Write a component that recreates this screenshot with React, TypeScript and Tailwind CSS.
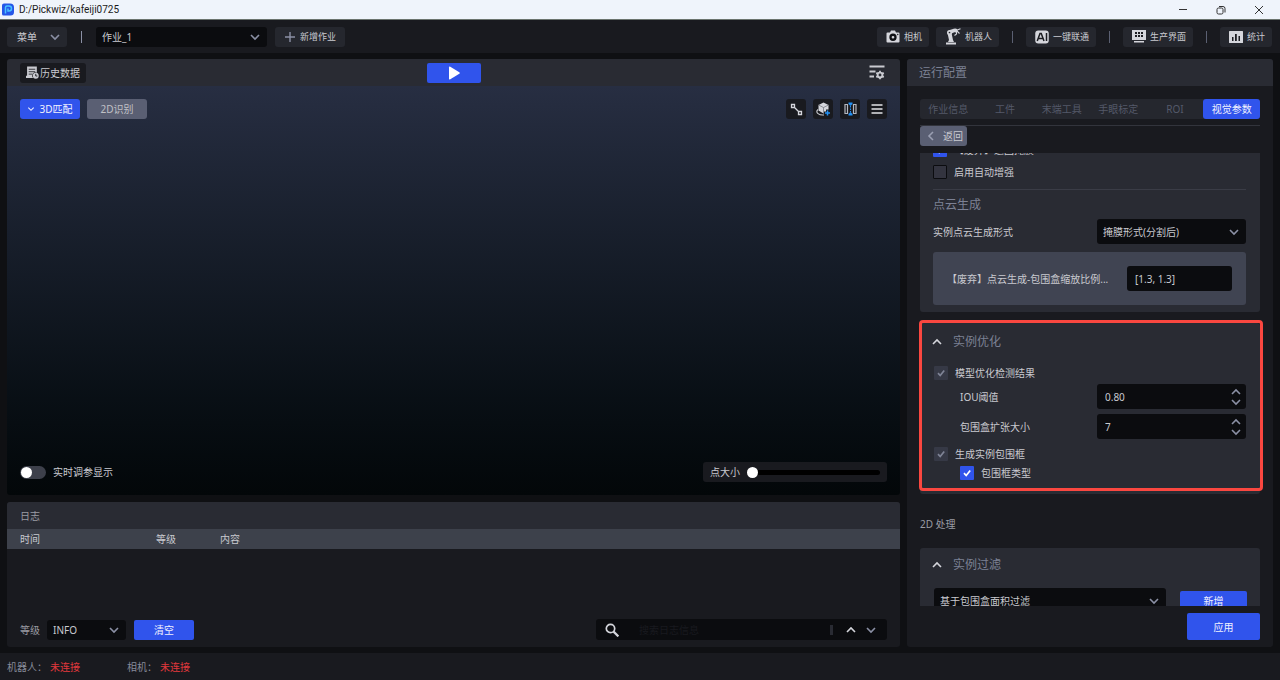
import React from "react";

function Chevron({ up = false, left = false, className = "" }: { up?: boolean; left?: boolean; className?: string }) {
  const d = left ? "M8 2 4 6l4 4" : up ? "M2 8l4-4 4 4" : "M2 4l4 4 4-4";
  return (
    <svg viewBox="0 0 12 12" className={"shrink-0 " + className} fill="none" stroke="currentColor" strokeWidth="1.6" aria-hidden="true">
      <path d={d} />
    </svg>
  );
}

function LogoIcon() {
  return (
    <svg viewBox="0 0 24 26" className="h-[13px] w-3 shrink-0" aria-hidden="true">
      <path d="M4 1h12a8 8 0 0 1 8 8v9a7 7 0 0 1-7 7H3a3 3 0 0 1-3-3V5a4 4 0 0 1 4-4z" fill="#2456e8" />
      <path d="M7 21V9a3 3 0 0 1 3-3h4a4.500 4.500 0 0 1 0 10h-2v-5" fill="none" stroke="#49c4ff" strokeWidth="3" />
    </svg>
  );
}

function HistoryIcon() {
  return (
    <svg viewBox="0 0 24 24" className="size-[13px] shrink-0" aria-hidden="true">
      <path d="M2 1h18v11.500a6 6 0 0 0-7 9.500H0v-4h2z" fill="#c9cad0" />
      <path d="M5 6h12M5 10.500h12M5 15h7" stroke="#191a1f" strokeWidth="1.500" />
      <circle cx="18" cy="18" r="5.500" fill="#c9cad0" />
      <path d="M18 14.500V18.500h3" fill="none" stroke="#191a1f" strokeWidth="1.700" />
    </svg>
  );
}

function CameraIcon() {
  return (
    <svg viewBox="0 0 28 26" className="h-[13px] w-3.5 shrink-0" aria-hidden="true">
      <path d="M3 5h5l2-4h8l2 4h5a2 2 0 0 1 2 2v16a2 2 0 0 1-2 2H3a2 2 0 0 1-2-2V7a2 2 0 0 1 2-2z" fill="#d5d6dc" />
      <circle cx="14" cy="14.500" r="5" fill="#d5d6dc" stroke="#101115" strokeWidth="4.600" />
      <circle cx="23.500" cy="9" r="1.400" fill="#17181c" />
    </svg>
  );
}

function RobotIcon() {
  return (
    <svg viewBox="0 0 32 34" className="h-[17px] w-4 shrink-0" fill="#d5d6dc" aria-hidden="true">
      <path d="M2 29h20v4H2zM6 28l2-4h8l2 4zM8 24 5 10h8l3 14z" />
      <circle cx="9" cy="9" r="5" />
      <path d="M8 4.500 19 1l3 6-11 5z" />
      <circle cx="21" cy="5" r="4" />
      <path d="M22 5l9-3.500M23 6v6l-4 3M24 6l5 5" fill="none" stroke="#d5d6dc" strokeWidth="2.200" />
      <circle cx="9" cy="9" r="1.700" fill="#25272e" />
    </svg>
  );
}

function AiIcon() {
  return (
    <svg viewBox="0 0 28 28" className="size-3.5 shrink-0" aria-hidden="true">
      <rect x="0.500" y="1" width="27" height="26" rx="6" fill="#d5d6dc" />
      <path d="M4.500 22 10 7h2.500L18 22M7 17h9M23 6v16" fill="none" stroke="#1c1d22" strokeWidth="3" />
    </svg>
  );
}

function ScreenIcon() {
  return (
    <svg viewBox="0 0 14 13" className="h-[13px] w-3.5 shrink-0" aria-hidden="true">
      <path d="M0 0h14v10H0zM2 11h10v1.500H2z" fill="#d5d6dc" />
      <path d="M3 2h2v2H3zM6 2h2v2H6zM9 2h2v2H9zM3 5h2v2H3zM6 5h2v2H6zM9 5h2v2H9z" fill="#1c1d22" />
    </svg>
  );
}

function ChartIcon() {
  return (
    <svg viewBox="0 0 14 12" className="h-3 w-3.5 shrink-0" aria-hidden="true">
      <rect width="14" height="12" rx="0.500" fill="#d5d6dc" />
      <path d="M3 6h1.500v4H3zM6 3h1.800v7H6zM9.500 5H11v5H9.500z" fill="#1c1d22" />
    </svg>
  );
}

function FilterGearIcon() {
  return (
    <svg viewBox="0 0 32 30" className="h-[15px] w-4 shrink-0" fill="none" stroke="#c9cad0" aria-hidden="true">
      <path d="M1 3h30M1 13h12M1 23h9" strokeWidth="3.600" />
      <circle cx="22" cy="20" r="4.800" strokeWidth="3.800" />
      <path d="M22 11.500v4M22 24.500v4M14.600 15.800l3.500 2M26 22.200l3.500 2M14.600 24.200l3.500-2M26 17.800l3.500-2" strokeWidth="3.600" />
    </svg>
  );
}

function NodesIcon() {
  return (
    <svg viewBox="0 0 13 13" className="size-[13px]" fill="none" stroke="#d5d6dc" strokeWidth="1.300" aria-hidden="true">
      <path d="M1.500 1.500h3v3h-3zM8.500 8.500h3v3h-3zM4.500 4.500l4 4" />
    </svg>
  );
}

function CubeIcon() {
  return (
    <svg viewBox="0 0 30 30" className="size-[15px]" aria-hidden="true">
      <path d="M15 1 25 6v11l-10 6-10-6V6z" fill="#d5d6dc" />
      <path d="m5 6 10 5 10-5M15 11v12" fill="none" stroke="#6b6d76" strokeWidth="1.400" />
      <path d="M4 15c-7 6 3 12 12 11" fill="none" stroke="#c9cad0" strokeWidth="2.200" />
      <path d="M23 15v14M16 22h14" stroke="#191a1f" strokeWidth="6" />
      <path d="M23 17v10M18 22h10" stroke="#2391f5" strokeWidth="3" />
    </svg>
  );
}

function SplitIcon() {
  return (
    <svg viewBox="0 0 13 14" className="h-3.5 w-[13px]" aria-hidden="true">
      <path d="M1 2.500h2.500v9H1zM9.500 2.500H12v9H9.500z" fill="none" stroke="#b4b7bf" strokeWidth="1.200" />
      <path d="M6.500 4v6" stroke="#2391f5" strokeWidth="1" strokeDasharray="1.500 1" />
      <path d="M4.500.500h4v1.500l-2 2-2-2zM4.500 13.500h4V12l-2-2-2 2z" fill="#2391f5" />
    </svg>
  );
}

function MenuIcon() {
  return (
    <svg viewBox="0 0 24 24" className="size-3" stroke="#e2e3e8" strokeWidth="3.400" aria-hidden="true">
      <path d="M1 4h22M1 12h22M1 20h22" />
    </svg>
  );
}

function ToolButton({ icon, label }: { icon: React.ReactNode; label: string }) {
  return (
    <button className="flex h-5 items-center gap-1 rounded-[3px] bg-[#25272e] pr-[7px] pl-[9px] text-[9px] text-[#c9cad0]">
      {icon}
      {label}
    </button>
  );
}

function Separator() {
  return <span className="h-3 w-px shrink-0 bg-[#5b6072]" />;
}

function Select({ id, label, value, className }: { id: string; label: string; value: string; className: string }) {
  return (
    <div className={"grid items-center " + className}>
      <select
        id={id}
        aria-label={label}
        className="col-start-1 row-start-1 size-full appearance-none rounded-[3px] bg-[#0b0c0f] pr-6 pl-1.5 text-[#c9cad0]"
      >
        <option>{value}</option>
      </select>
      <Chevron className="pointer-events-none col-start-1 row-start-1 mr-1.5 size-3 justify-self-end text-[#8b90a5]" />
    </div>
  );
}

function Check({ label, state, className = "" }: { label: string; state: "on" | "off" | "locked"; className?: string }) {
  const box =
    state === "on"
      ? "bg-[#3054ec]"
      : state === "locked"
        ? "bg-[#363946]"
        : "border border-[#0b0c0f] bg-[#33343f]";
  return (
    <label className={"flex items-center gap-[7px] " + className}>
      <span className="grid size-3.5 shrink-0">
        <input
          type="checkbox"
          defaultChecked={state !== "off"}
          disabled={state === "locked"}
          className={"col-start-1 row-start-1 size-3.5 appearance-none rounded-[1px] " + box}
        />
        {state !== "off" && (
          <svg
            viewBox="0 0 14 14"
            className={"pointer-events-none col-start-1 row-start-1 size-3.5 " + (state === "on" ? "text-white" : "text-[#7f8496]")}
            fill="none"
            stroke="currentColor"
            strokeWidth="1.700"
            aria-hidden="true"
          >
            <path d="m4 7.200 2.200 2.300L10.200 4.500" />
          </svg>
        )}
      </span>
      {label}
    </label>
  );
}

function NumberRow({ id, label, value }: { id: string; label: string; value: string }) {
  return (
    <div className="flex h-[25px] items-center justify-between pl-[29px]">
      <label htmlFor={id}>{label}</label>
      <div className="flex h-[25px] w-[149px] items-center rounded-[3px] bg-[#0b0c0f] pr-1 pl-2">
        <input id={id} defaultValue={value} className="w-full min-w-0 bg-transparent text-[#c9cad0] outline-none" />
        <div className="flex flex-col text-[#8b90a5]">
          <button aria-label={label + " +"}>
            <Chevron up className="size-3" />
          </button>
          <button aria-label={label + " -"} className="-mt-0.5">
            <Chevron className="size-3" />
          </button>
        </div>
      </div>
    </div>
  );
}

function SectionTitle({ children }: { children: string }) {
  return (
    <h3 className="flex h-5 items-center gap-2.5 text-[12px] text-[#7c8194]">
      <button aria-label={children}>
        <Chevron up className="size-3 text-[#d5d6dc]" />
      </button>
      {children}
    </h3>
  );
}

function TitleBar() {
  return (
    <header className="flex h-5 shrink-0 items-center gap-[5px] border-b border-[#6b746e] bg-[#eff4fb] pr-4 pl-0.5 text-[#1a1a1a]">
      <LogoIcon />
      <h1 className="flex-1 font-[Roboto,sans-serif] text-[10px]">D:/Pickwiz/kafeiji0725</h1>
      <div className="flex items-center gap-7">
        <button aria-label="最小化">
          <svg viewBox="0 0 10 10" className="size-2.5" stroke="#333" aria-hidden="true">
            <path d="M1 4.500h8" />
          </svg>
        </button>
        <button aria-label="还原">
          <svg viewBox="0 0 10 10" className="size-2.5" fill="none" stroke="#333" aria-hidden="true">
            <rect x="1" y="3" width="6" height="6" rx="1.500" />
            <path d="M3 1.500h4a2 2 0 0 1 2 2v4" />
          </svg>
        </button>
        <button aria-label="关闭">
          <svg viewBox="0 0 10 10" className="size-2.5" stroke="#333" aria-hidden="true">
            <path d="m1 1 8 8M9 1 1 9" />
          </svg>
        </button>
      </div>
    </header>
  );
}

function Toolbar() {
  return (
    <nav className="flex h-[33px] shrink-0 items-center bg-[#191a1f] pr-2 pl-[7px]">
      <button className="flex h-5 w-[60px] items-center justify-between rounded-[3px] bg-[#25272e] pr-1.5 pl-2.5 text-[#c9cad0]">
        菜单
        <Chevron className="size-3 text-[#8b90a5]" />
      </button>
      <span className="mx-[14px] h-3 w-px bg-[#8b90a5]" />
      <Select id="job" label="作业" value="作业_1" className="h-5 w-[171px]" />
      <button className="ml-2 flex h-5 w-[70px] items-center justify-center gap-1 rounded-[3px] bg-[#25272e] text-[9px] text-[#c9cad0]">
        <svg viewBox="0 0 12 12" className="size-3" stroke="#8b90a5" strokeWidth="1.400" aria-hidden="true">
          <path d="M6 1v10M1 6h10" />
        </svg>
        新增作业
      </button>
      <div className="flex flex-1 items-center justify-end gap-[13px]">
        <div className="flex gap-[7px]">
          <ToolButton icon={<CameraIcon />} label="相机" />
          <ToolButton icon={<RobotIcon />} label="机器人" />
        </div>
        <Separator />
        <ToolButton icon={<AiIcon />} label="一键联通" />
        <Separator />
        <ToolButton icon={<ScreenIcon />} label="生产界面" />
        <Separator />
        <ToolButton icon={<ChartIcon />} label="统计" />
      </div>
    </nav>
  );
}

function Viewport() {
  const tools = [
    { name: "测量", icon: <NodesIcon /> },
    { name: "模型", icon: <CubeIcon /> },
    { name: "对比", icon: <SplitIcon /> },
    { name: "更多", icon: <MenuIcon /> },
  ];
  return (
    <section className="flex min-h-0 flex-1 flex-col overflow-hidden rounded-[3px]">
      <div className="grid h-[27px] shrink-0 grid-cols-3 items-center bg-[#292b33] px-[13px]">
        <button className="flex h-5 items-center gap-px justify-self-start rounded-[3px] bg-[#191a1f] px-1.5 text-[#c9cad0]">
          <HistoryIcon />
          历史数据
        </button>
        <button aria-label="运行" className="flex h-5 w-[54px] items-center justify-center justify-self-center rounded-[2px] bg-[#3054ec]">
          <svg viewBox="0 0 12 14" className="h-3.5 w-3" fill="#fff" aria-hidden="true">
            <path d="M1 1.500Q1 0 2.300.700l9 5.500q1 .800 0 1.600l-9 5.500Q1 14 1 12.500z" />
          </svg>
        </button>
        <button aria-label="显示设置" className="mr-0.5 justify-self-end">
          <FilterGearIcon />
        </button>
      </div>
      <div className="flex flex-1 flex-col justify-between bg-linear-to-b from-[#272e42] to-[#030709] p-[13px]">
        <div className="flex justify-between">
          <div className="flex gap-[7px]">
            <button className="flex h-5 w-[60px] items-center justify-center gap-1 rounded-[3px] bg-[#3054ec] text-[#f0f2ff]">
              <Chevron className="size-2" />
              3D匹配
            </button>
            <button className="h-5 w-[60px] rounded-[3px] bg-[#5a5f73] text-[#c0c1c6]">2D识别</button>
          </div>
          <div className="flex gap-[7px]">
            {tools.map((t) => (
              <button key={t.name} aria-label={t.name} className="flex size-5 items-center justify-center rounded-[3px] bg-[#191a1f]">
                {t.icon}
              </button>
            ))}
          </div>
        </div>
        <div className="flex items-center justify-between">
          <label className="flex items-center gap-[7px]">
            <input
              type="checkbox"
              role="switch"
              className="flex h-[13px] w-[26px] appearance-none items-center rounded-full bg-[#3d404b] px-px before:size-[11px] before:rounded-full before:bg-white"
            />
            实时调参显示
          </label>
          <label className="flex h-5 items-center gap-[7px] rounded-[3px] bg-[#191a1f] px-[7px]">
            点大小
            <input
              type="range"
              defaultValue={0}
              className="h-[5px] w-[133px] appearance-none rounded-full bg-black [&::-webkit-slider-thumb]:size-[11px] [&::-webkit-slider-thumb]:appearance-none [&::-webkit-slider-thumb]:rounded-full [&::-webkit-slider-thumb]:bg-white"
            />
          </label>
        </div>
      </div>
    </section>
  );
}

function LogPanel() {
  return (
    <section className="flex h-[145px] shrink-0 flex-col overflow-hidden rounded-[3px] bg-[#191a1f]">
      <h2 className="flex h-[27px] shrink-0 items-center bg-[#292b33] px-[13px] text-[#9a9ca3]">日志</h2>
      <table className="w-full table-fixed">
        <thead>
          <tr className="h-5 bg-[#3d414b] text-left">
            <th className="w-[149px] pl-[13px] font-normal">时间</th>
            <th className="w-16 font-normal">等级</th>
            <th className="font-normal">内容</th>
          </tr>
        </thead>
        <tbody />
      </table>
      <div className="mt-auto mb-[7px] flex h-[21px] items-center px-[13px]">
        <label htmlFor="level" className="text-[#9a9ca3]">等级</label>
        <Select id="level" label="等级" value="INFO" className="ml-[7px] h-5 w-[79px]" />
        <button className="ml-2 h-5 w-[60px] rounded-[2px] bg-[#3054ec] text-[#f0f2ff]">清空</button>
        <div className="ml-auto flex h-[21px] w-[291px] items-center rounded-[3px] bg-[#0b0c0f] pr-2.5 pl-[9px]">
          <svg viewBox="0 0 14 14" className="size-3.5 shrink-0" fill="none" stroke="#d5d6dc" aria-hidden="true">
            <circle cx="5.500" cy="5.500" r="4.200" strokeWidth="1.700" />
            <path d="m8.600 8.600 4.800 4.800" strokeWidth="2.200" />
          </svg>
          <input
            aria-label="搜索日志信息"
            placeholder="搜索日志信息"
            className="ml-5 min-w-0 flex-1 bg-transparent outline-none placeholder:text-[#191a1f]"
          />
          <span className="mr-3 h-2.5 w-[3px] bg-[#292b33]" />
          <button aria-label="上一个">
            <Chevron up className="size-3 text-[#d5d6dc]" />
          </button>
          <button aria-label="下一个" className="ml-2">
            <Chevron className="size-3 text-[#8b90a5]" />
          </button>
        </div>
      </div>
    </section>
  );
}

function ConfigPanel() {
  const tabs = ["作业信息", "工件", "末端工具", "手眼标定", "ROI"];
  return (
    <aside className="flex w-[366px] shrink-0 flex-col overflow-hidden rounded-[3px] bg-[#191a1f]">
      <h2 className="flex h-[27px] shrink-0 items-center bg-[#292b33] px-3 text-[12px] text-[#7c8194]">运行配置</h2>
      <div className="shrink-0 px-[13px] pt-[13px]">
        <div className="grid h-5 grid-cols-6 rounded-[3px] bg-[#25272e]">
          {tabs.map((t) => (
            <button key={t} className="text-[#545969]">
              {t}
            </button>
          ))}
          <button className="rounded-[3px] bg-[#3054ec] text-[#f0f2ff]">视觉参数</button>
        </div>
        <div className="mt-1.5 border-t border-[#32343c]">
          <button className="flex h-5 w-[47px] items-center justify-between rounded-[3px] bg-[#5a5f73] pr-1 pl-[5px] text-[#c9cad0]">
            <Chevron left className="size-3 text-[#9a9fb2]" />
            返回
          </button>
        </div>
      </div>
      <div className="mt-[7px] min-h-0 flex-1 overflow-hidden px-[13px]">
        <div className="-mt-2.5 rounded-[3px] bg-[#292b33] pr-3.5 pb-[7px] pl-[13px]">
          <Check label="【废弃】返回掩膜" state="on" />
          <Check label="启用自动增强" state="off" className="mt-2" />
          <h3 className="mt-2.5 flex h-[30px] items-center border-t border-[#3a3c46] text-[12px] text-[#7c8194]">点云生成</h3>
          <div className="flex h-[25px] items-center justify-between">
            <label htmlFor="cloud">实例点云生成形式</label>
            <Select id="cloud" label="实例点云生成形式" value="掩膜形式(分割后)" className="h-[25px] w-[149px]" />
          </div>
          <div className="mt-2 flex h-[53px] items-center justify-between gap-2 rounded-[3px] bg-[#404452] px-3.5">
            <label htmlFor="ratio" className="truncate">
              【废弃】点云生成-包围盒缩放比例...
            </label>
            <input
              id="ratio"
              defaultValue="[1.3, 1.3]"
              className="h-[25px] w-[105px] shrink-0 rounded-[3px] bg-[#0b0c0f] px-2 text-[#c9cad0] outline-none"
            />
          </div>
        </div>

        <div className="relative mt-[11px] rounded-[3px] bg-[#292b33] pt-[9px] pr-3.5 pb-3.5 pl-[11px]">
          <SectionTitle>实例优化</SectionTitle>
          <Check label="模型优化检测结果" state="locked" className="mt-3.5 pl-[3px]" />
          <div className="mt-1 flex flex-col gap-[5px]">
            <NumberRow id="iou" label="IOU阈值" value="0.80" />
            <NumberRow id="expand" label="包围盒扩张大小" value="7" />
          </div>
          <Check label="生成实例包围框" state="locked" className="mt-2 pl-[3px]" />
          <Check label="包围框类型" state="on" className="mt-[5px] pl-[29px]" />
          <div className="pointer-events-none absolute -top-[3px] -right-[3px] bottom-[3px] -left-px rounded-[4px] border-3 border-[#fa4740]" />
        </div>

        <h2 className="mt-5 flex h-5 items-center text-[#9a9ca3]">2D 处理</h2>

        <div className="mt-3.5 rounded-[3px] bg-[#292b33] pt-[7px] pr-[13px] pb-3 pl-[11px]">
          <SectionTitle>实例过滤</SectionTitle>
          <div className="mt-[13px] flex items-center justify-between pl-[3px]">
            <Select id="filter" label="实例过滤" value="基于包围盒面积过滤" className="h-[25px] w-[232px]" />
            <button className="h-5 w-[67px] rounded-[2px] bg-[#3054ec] text-[#f0f2ff]">新增</button>
          </div>
        </div>
      </div>
      <div className="flex shrink-0 justify-end px-[13px] py-[7px]">
        <button className="h-[27px] w-[73px] rounded-[2px] bg-[#3054ec] text-[#f0f2ff]">应用</button>
      </div>
    </aside>
  );
}

export default function App() {
  return (
    <div className="flex h-screen min-h-[480px] flex-col overflow-hidden bg-[#0f1013] font-['Noto_Sans','Noto_Sans_CJK_SC',sans-serif] text-[10px] leading-[14px] text-[#c9cad0]">
      <TitleBar />
      <Toolbar />
      <main className="flex min-h-0 flex-1 gap-[7px] px-[7px] py-1.5">
        <div className="flex min-w-0 flex-1 flex-col gap-[7px]">
          <Viewport />
          <LogPanel />
        </div>
        <ConfigPanel />
      </main>
      <footer className="flex h-[27px] shrink-0 items-center bg-[#191a1f] px-[7px] text-[#868a99]">
        <p className="w-[120px]">
          机器人：<span className="ml-[3px] text-[#e0383c]">未连接</span>
        </p>
        <p>
          相机：<span className="ml-[3px] text-[#e0383c]">未连接</span>
        </p>
      </footer>
    </div>
  );
}
